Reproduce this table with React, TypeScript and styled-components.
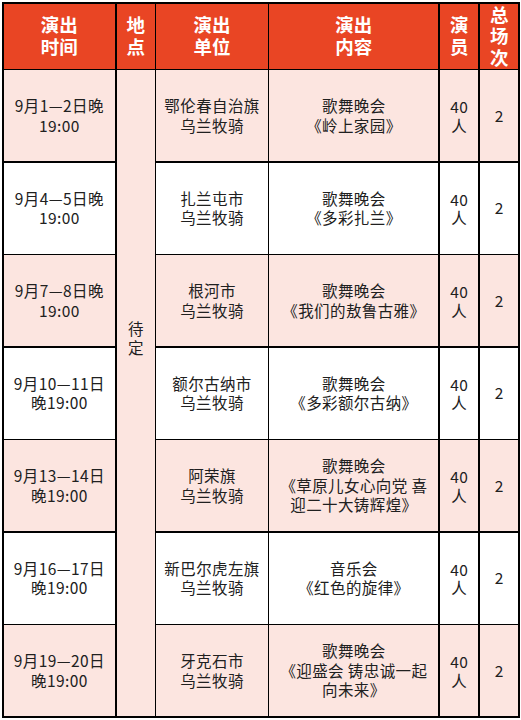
import React from "react";
import styled, { createGlobalStyle } from "styled-components";

const Global = createGlobalStyle`
  html, body { margin: 0; padding: 0; background: #ffffff; }
  body { font-family: "Noto Sans CJK SC", "Noto Sans", sans-serif; }
`;

const Page = styled.div`
  padding: 2px;
  width: 518px;
`;

const Table = styled.div`
  display: grid;
  grid-template-columns: 111.7px 38.1px 111.5px 169.2px 38.5px 38.5px;
  grid-template-rows: 65px repeat(7, 91px);
  gap: 1.5px;
  padding: 1.5px;
  background: #000000;
`;

const HeaderCell = styled.div`
  background: #e94524;
  color: #ffffff;
  font-weight: 700;
  font-size: 18.5px;
  line-height: 21.6px;
  display: flex;
  flex-direction: column;
  align-items: center;
  justify-content: center;
  text-align: center;
  overflow: visible;
`;

const Cell = styled.div<{ $pink: boolean }>`
  background: ${(p) => (p.$pink ? "#fce5e0" : "#ffffff")};
  color: #202020;
  font-size: 15.5px;
  line-height: 19.5px;
  letter-spacing: 0.4px;
  display: flex;
  flex-direction: column;
  align-items: center;
  justify-content: center;
  text-align: center;
  white-space: nowrap;
`;

const NarrowCell = styled(Cell)`
  line-height: 18.5px;
`;

const PlaceCell = styled.div`
  grid-column: 2;
  grid-row: 2 / 9;
  background: #fce5e0;
  color: #202020;
  font-size: 15.5px;
  line-height: 19px;
  display: flex;
  flex-direction: column;
  align-items: center;
  justify-content: center;
  padding-bottom: 111px;
`;

const Line = styled.span`
  display: block;
`;

type Row = {
  time: string[];
  unit: string[];
  content: string[];
};

const rows: Row[] = [
  { time: ["9月1—2日晚", "19:00"], unit: ["鄂伦春自治旗", "乌兰牧骑"], content: ["歌舞晚会", "《岭上家园》"] },
  { time: ["9月4—5日晚", "19:00"], unit: ["扎兰屯市", "乌兰牧骑"], content: ["歌舞晚会", "《多彩扎兰》"] },
  { time: ["9月7—8日晚", "19:00"], unit: ["根河市", "乌兰牧骑"], content: ["歌舞晚会", "《我们的敖鲁古雅》"] },
  { time: ["9月10—11日", "晚19:00"], unit: ["额尔古纳市", "乌兰牧骑"], content: ["歌舞晚会", "《多彩额尔古纳》"] },
  { time: ["9月13—14日", "晚19:00"], unit: ["阿荣旗", "乌兰牧骑"], content: ["歌舞晚会", "《草原儿女心向党 喜", "迎二十大铸辉煌》"] },
  { time: ["9月16—17日", "晚19:00"], unit: ["新巴尔虎左旗", "乌兰牧骑"], content: ["音乐会", "《红色的旋律》"] },
  { time: ["9月19—20日", "晚19:00"], unit: ["牙克石市", "乌兰牧骑"], content: ["歌舞晚会", "《迎盛会 铸忠诚一起", "向未来》"] },
];

const headers: string[][] = [
  ["演出", "时间"],
  ["地", "点"],
  ["演出", "单位"],
  ["演出", "内容"],
  ["演", "员"],
  ["总", "场", "次"],
];

const Lines: React.FC<{ items: string[] }> = ({ items }) => (
  <>
    {items.map((t, i) => (
      <Line key={i}>{t}</Line>
    ))}
  </>
);

export default function App() {
  return (
    <>
      <Global />
      <Page>
        <Table>
          {headers.map((h, i) => (
            <HeaderCell key={`h${i}`}>
              <Lines items={h} />
            </HeaderCell>
          ))}
          <PlaceCell>
            <Lines items={["待", "定"]} />
          </PlaceCell>
          {rows.map((r, i) => {
            const pink = i % 2 === 0;
            return (
              <React.Fragment key={i}>
                <Cell $pink={pink}>
                  <Lines items={r.time} />
                </Cell>
                <Cell $pink={pink}>
                  <Lines items={r.unit} />
                </Cell>
                <Cell $pink={pink}>
                  <Lines items={r.content} />
                </Cell>
                <NarrowCell $pink={pink}>
                  <Lines items={["40", "人"]} />
                </NarrowCell>
                <Cell $pink={pink}>
                  <Line>2</Line>
                </Cell>
              </React.Fragment>
            );
          })}
        </Table>
      </Page>
    </>
  );
}
